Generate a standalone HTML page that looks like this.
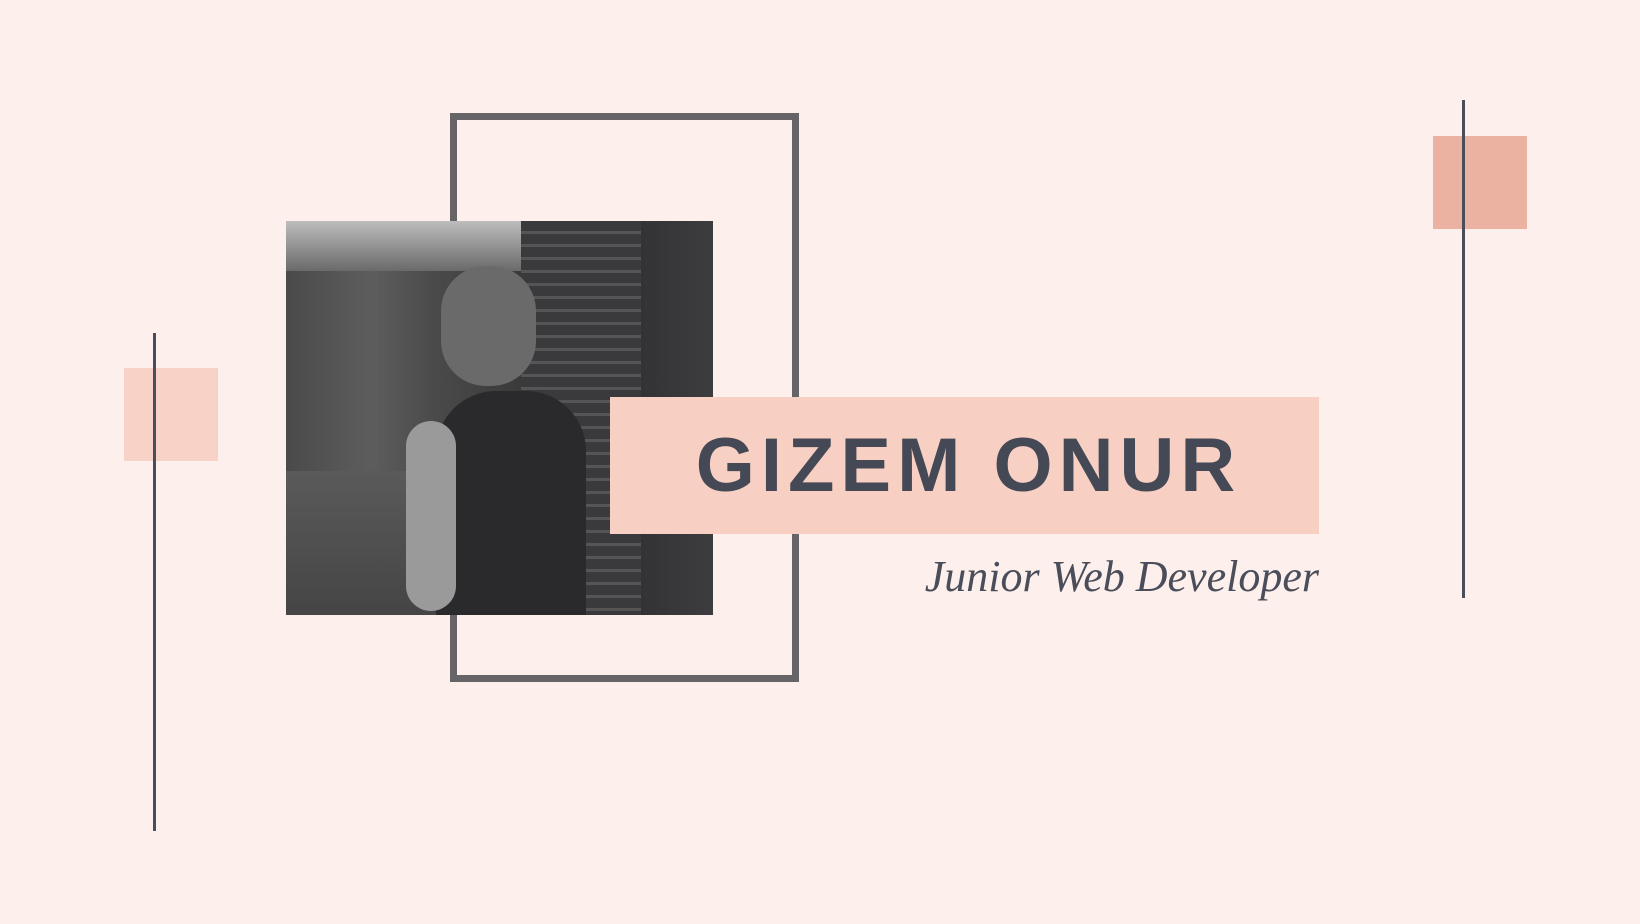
<!DOCTYPE html>
<html><head><meta charset="utf-8"><style>
html,body{margin:0;padding:0}
body{width:1640px;height:924px;background:#fdefeb;position:relative;overflow:hidden;font-family:"Liberation Sans",sans-serif}
.a{position:absolute}
</style></head><body>
<div class="a" style="left:124px;top:368px;width:94px;height:93px;background:#f8d2c7"></div>
<div class="a" style="left:153px;top:333px;width:3px;height:498px;background:#4a4d5a"></div>
<div class="a" style="left:1433px;top:136px;width:94px;height:93px;background:#ebb1a1"></div>
<div class="a" style="left:1462px;top:100px;width:3px;height:498px;background:#4a4d5a"></div>
<div class="a" style="left:450px;top:113px;width:335px;height:555px;border:7px solid #666466"></div>
<div class="a" style="left:286px;top:221px;width:427px;height:394px;overflow:hidden;background:#3a3a3c">
  <div class="a" style="left:0;top:0;width:427px;height:394px;background:linear-gradient(90deg,#4a4a4a 0%,#5d5d5d 20%,#4a4a4a 35%,#3a3a3a 55%,#2e2e30 75%,#3d3d3f 100%)"></div>
  <div class="a" style="left:0;top:0;width:240px;height:50px;background:linear-gradient(180deg,#bdbdbd,#6a6a6a)"></div>
  <div class="a" style="left:235px;top:0;width:120px;height:394px;background:repeating-linear-gradient(180deg,#3a3a3c 0 10px,#555 10px 13px)"></div>
  <div class="a" style="left:0;top:250px;width:170px;height:144px;background:linear-gradient(180deg,#5a5a5a,#454545)"></div>
  <div class="a" style="left:150px;top:170px;width:150px;height:224px;border-radius:60px 60px 0 0;background:#2a2a2c"></div>
  <div class="a" style="left:155px;top:45px;width:95px;height:120px;border-radius:45px;background:#6a6a6a"></div>
  <div class="a" style="left:120px;top:200px;width:50px;height:190px;border-radius:25px;background:#9a9a9a"></div>
</div>
<div class="a" style="left:610px;top:397px;width:709px;height:137px;background:#f8cfc3"></div>
<div class="a" style="left:610px;top:421px;width:709px;text-align:center;font-weight:bold;font-size:76px;line-height:90px;letter-spacing:6px;color:#444955;font-family:'Liberation Sans',sans-serif;padding-left:4px">GIZEM ONUR</div>
<div class="a" style="left:800px;top:551px;width:519px;text-align:right;font-style:italic;font-size:44px;color:#4a4d5a;font-family:'Liberation Serif',serif">Junior Web Developer</div>
</body></html>
